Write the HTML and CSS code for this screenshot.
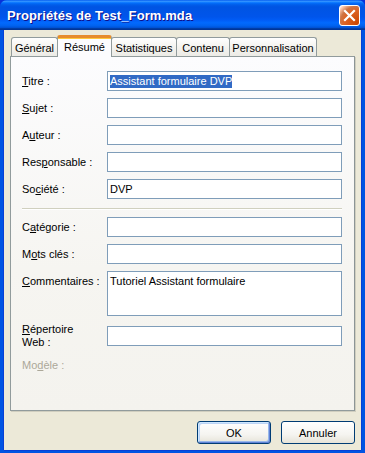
FILE: index.html
```html
<!DOCTYPE html>
<html lang="fr">
<head>
<meta charset="utf-8">
<title>Propriétés de Test_Form.mda</title>
<link rel="stylesheet" href="styles.css">
</head>
<body>
<div class="window">
  <div class="titlebar">
    <span class="title">Propriétés de Test_Form.mda</span>
    <span class="close" aria-label="Fermer">
      <svg width="13" height="13" viewBox="0 0 13 13"><path d="M2 2 L11 11 M11 2 L2 11" stroke="#fff" stroke-width="2.2" stroke-linecap="square" fill="none"/></svg>
    </span>
  </div>
  <div class="client">
    <div class="tabs">
      <div class="tab w-general">Général</div>
      <div class="tab selected w-resume">Résumé</div>
      <div class="tab w-stats">Statistiques</div>
      <div class="tab w-contenu">Contenu</div>
      <div class="tab w-perso">Personnalisation</div>
    </div>
    <div class="panel">
      <div class="form">
        <div class="label"><u>T</u>itre :</div>
        <div class="field"><span class="sel">Assistant formulaire DVP</span></div>

        <div class="label"><u>S</u>ujet :</div>
        <div class="field"></div>

        <div class="label">A<u>u</u>teur :</div>
        <div class="field"></div>

        <div class="label">Res<u>p</u>onsable :</div>
        <div class="field"></div>

        <div class="label">So<u>c</u>iété :</div>
        <div class="field">DVP</div>

        <div class="sep"></div>

        <div class="label">C<u>a</u>tégorie :</div>
        <div class="field"></div>

        <div class="label">M<u>o</u>ts clés :</div>
        <div class="field"></div>

        <div class="label top"><u>C</u>ommentaires :</div>
        <div class="field area">Tutoriel Assistant formulaire</div>

        <div class="label two"><u>R</u>épertoire<br>Web :</div>
        <div class="field shift"></div>

        <div class="label disabled">Mo<u>d</u>èle :</div>
      </div>
    </div>
    <div class="buttons">
      <div class="btn default">OK</div>
      <div class="btn">Annuler</div>
    </div>
  </div>
</div>
</body>
</html>
```
FILE: styles.css
```css
* { box-sizing: border-box; }
html, body { margin: 0; padding: 0; }
body {
  width: 365px;
  height: 453px;
  overflow: hidden;
  font-family: "Liberation Sans", Arial, sans-serif;
  font-size: 11px;
  color: #000;
  background: #0831d9;
}
.window {
  width: 365px;
  height: 453px;
  display: flex;
  flex-direction: column;
  border-radius: 7px 7px 0 0;
  overflow: hidden;
  background: #0054e3;
}
.titlebar {
  height: 30px;
  flex: none;
  display: flex;
  align-items: center;
  justify-content: space-between;
  padding: 0 5px 0 7px;
  background: linear-gradient(to bottom, #0058ee 0%, #3593ff 4%, #288eff 6%, #127dff 8%, #036ffc 10%, #0262ee 14%, #0057e5 20%, #0054e3 24%, #0055eb 56%, #005bf5 66%, #026afe 76%, #0062ef 86%, #0052d6 92%, #0040ab 94%, #003092 100%);
}
.title {
  color: #fff;
  font-weight: bold;
  font-size: 13px;
  letter-spacing: 0.1px;
  text-shadow: 1px 1px #0f1089;
  padding-top: 1px;
}
.close {
  width: 21px;
  height: 21px;
  margin-top: 1px;
  border: 1px solid #fff;
  border-radius: 3px;
  display: flex;
  align-items: center;
  justify-content: center;
  background: radial-gradient(circle at 90% 90%, #cc4600 0%, #dc6527 55%, #cd7546 70%, #ffccb2 90%, #fff 100%);
}
.client {
  flex: 1;
  margin: 0 4px 4px 4px;
  background: #ece9d8;
  padding: 5px 6px 6px 6px;
  display: flex;
  flex-direction: column;
  box-shadow: -1px 0 #0840d6, 1px 0 #0840d6, 0 1px #0840d6;
}
.tabs {
  height: 21px;
  display: flex;
  align-items: flex-end;
  padding-left: 1px;
  position: relative;
  z-index: 1;
}
.tab {
  height: 19px;
  border: 1px solid #919b9c;
  border-bottom: none;
  border-radius: 3px 3px 0 0;
  background: linear-gradient(to bottom, #fff 0%, #f4f3ef 50%, #ecebe6 100%);
  display: flex;
  align-items: center;
  justify-content: center;
  padding-top: 2px;
  margin-right: -1px;
}
.tab.selected {
  height: 22px;
  margin-bottom: -1px;
  background: #fcfcfe;
  border-top: 3px solid #e68b2c;
  box-shadow: inset 0 1px #ffc83c;
  padding-top: 0;
  padding-bottom: 2px;
  position: relative;
  z-index: 2;
}
.w-general { width: 47px; }
.w-resume { width: 55px; }
.w-stats { width: 66px; }
.w-contenu { width: 54px; }
.w-perso { width: 88px; }
.panel {
  height: 355px;
  flex: none;
  border: 1px solid #919b9c;
  border-right-color: #8c9596;
  box-shadow: 1px 1px #d0cebf;
  background: linear-gradient(to bottom, #fcfcfe 0%, #f6f5f1 60%, #f4f3ee 100%);
  padding: 14px 0 0 11px;
}
.form {
  display: grid;
  grid-template-columns: 85px 235px;
  row-gap: 7px;
  align-items: center;
}
.label {
  line-height: 13px;
  white-space: nowrap;
}
.label.top { align-self: start; margin-top: 4px; }
.label.two { align-self: start; }
.label.disabled { color: #aca899; margin-top: 3px; }
.field {
  height: 20px;
  border: 1px solid #7f9db9;
  background: #fff;
  padding: 0 2px;
  display: flex;
  align-items: center;
  line-height: 13px;
  white-space: nowrap;
}
.field.area {
  height: 45px;
  align-items: flex-start;
  padding-top: 3px;
}
.field.shift { align-self: start; margin-top: 3px; }
.sel {
  background: #316ac5;
  color: #fff;
}
.sep {
  grid-column: 1 / 3;
  width: 320px;
  height: 2px;
  margin-top: 2px;
  border-top: 1px solid #d0d0bf;
  border-bottom: 1px solid #fff;
}
.buttons {
  margin-top: 10px;
  display: flex;
  justify-content: flex-end;
  gap: 10px;
}
.btn {
  width: 74px;
  height: 23px;
  border: 1px solid #003c74;
  border-radius: 3px;
  background: linear-gradient(to bottom, #fff 0%, #f5f4f0 60%, #e6e3d8 100%);
  display: flex;
  align-items: center;
  justify-content: center;
}
.btn.default {
  box-shadow: inset -1px -1px #6082d6, inset 1px 1px #cee7ff, inset -2px -2px #98b8ea, inset 2px 2px #bcd4f6;
}
```
